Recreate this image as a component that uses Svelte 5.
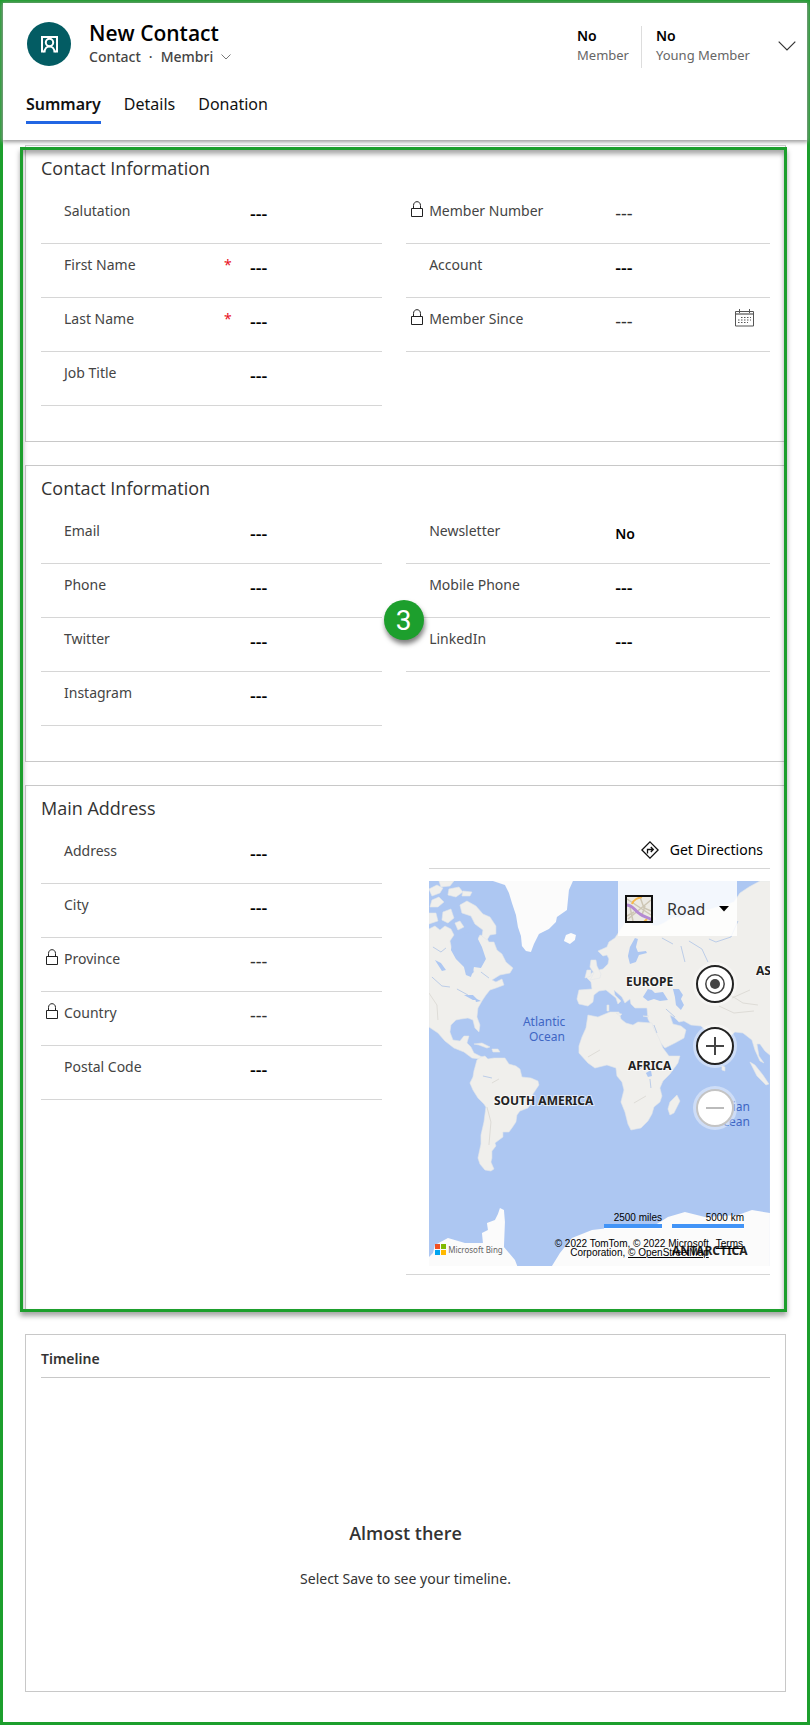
<script>
  // Form sections, each with a left and a right column of fields
  const sections = [
    {
      id: 'general',
      title: 'Contact Information',
      left: [
        { label: 'Salutation' },
        { label: 'First Name', required: true },
        { label: 'Last Name', required: true },
        { label: 'Job Title' }
      ],
      right: [
        { label: 'Member Number', locked: true },
        { label: 'Account' },
        { label: 'Member Since', locked: true, date: true }
      ]
    },
    {
      id: 'channels',
      title: 'Contact Information',
      left: [
        { label: 'Email' },
        { label: 'Phone' },
        { label: 'Twitter' },
        { label: 'Instagram' }
      ],
      right: [
        { label: 'Newsletter', value: 'No' },
        { label: 'Mobile Phone' },
        { label: 'LinkedIn' }
      ]
    },
    {
      id: 'address',
      title: 'Main Address',
      map: true,
      left: [
        { label: 'Address' },
        { label: 'City' },
        { label: 'Province', locked: true },
        { label: 'Country', locked: true },
        { label: 'Postal Code' }
      ],
      right: []
    }
  ];

  const tabs = ['Summary', 'Details', 'Donation'];
  let activeTab = $state('Summary');

  function fieldId(section, field) {
    return section.id + '-' + field.label.toLowerCase().replace(' ', '-');
  }
</script>

{#snippet fieldRow(section, field)}
  <div class="field">
    <span class="lock">
      {#if field.locked}
        <svg width="12" height="16" viewBox="0 0 12 16" fill="none" stroke="#222">
          <path d="M.5 7.5h11v8H.5zM2.5 7.500V4.500C2.500 -.6 9.500 -.6 9.500 4.500V7.500" />
        </svg>
      {/if}
    </span>
    <label for={fieldId(section, field)}>{field.label}</label>
    <span class="required">{field.required ? '*' : ''}</span>
    <input
      id={fieldId(section, field)}
      class:empty={!field.value}
      class:readonly={field.locked}
      value={field.value ?? '---'}
      readonly={field.locked}
    />
    {#if field.date}
      <button class="calendar" aria-label="Pick a date">
        <svg width="19" height="18" viewBox="0 0 19 18" fill="none" stroke="#555">
          <path d="M.5 2.500h18v14.500H.5zM4.500 0v4M14.500 0v4" />
          <path d="M1 5h17" stroke="#999" stroke-width="2" />
          <path d="M6 8.500h10M3 11h13M3 13.500h10" stroke-dasharray="1.500 1.500" />
        </svg>
      </button>
    {/if}
  </div>
{/snippet}

{#snippet mapPanel()}
  <div class="map-field">
    <div class="directions">
      <button>
        <svg width="18" height="18" viewBox="0 0 18 18" fill="none" stroke="#111" stroke-width="1.300">
          <path d="M9 .9 17.100 9 9 17.100.9 9zM6.500 12.500V8.500h5.500M9.800 6l2.500 2.500-2.500 2.500" />
        </svg>
        Get Directions
      </button>
    </div>
    <div class="map">
      <svg class="world" viewBox="0 0 341 385" preserveAspectRatio="xMidYMid slice">
        <rect width="341" height="385" fill="#adc7f2" />
        <g fill="#f0efec" stroke="#e3e6ea" stroke-width=".6" stroke-linejoin="round">
          <!-- North and Central America -->
          <path d="M0 48l6-3 5 4 5-4 6 3 3 6-4 6 2 9 7 7 8 8 4 10 3-3-1-9 6-4 1-8-4-8 4-8 6 2 3 5 5 0 3 8 5 4 4 8 7 6-3 5-10 2-8 5 4 2 6-3 2 6-8 3-6 2-4 5-4 6-4 7-1 9 3 8-1 7-4-4-2-8-5-2-7 1-5 1-5 5-1 7 3 8 7 1 4-5 5 0-2 7 4 4 3 6 8 4-2 2-8-1-8-6-10-4-9-7-7-8-9-6z" />
          <!-- Arctic islands -->
          <path d="M0 8l8-4 6 3-3 5-8 3zM10 0l15 0-4 5-9 1zM3 19l7-3 5 5-6 5-8 0zM20 8l10-2 4 5-7 5-8-2zM31 24l7-4 9 5 7 8 7 3 6 9 0 8-6 1-3 5-5-4 1-6-8-6-4-8-9-3zM14 31l8-3 3 9-6 5-6-3zM26 42l5-2 4 6-6 3zM0 32l7 0 2 8-9 3zM34 10l9 1-2 4-8 0z" />
          <path d="M45 163l8-1 8 4-3 1-8-3zM63 168l6 0 2 3-7 0z" />
          <!-- South America -->
          <path d="M48 179l4-3 4-1 3 3 6-1 11 0 4 6 7 2 4 3 2 8 9 1 7 3 1 4-6 9-1 8-4 6-8 3-3 4-1 7-4 6-3 4-6 0 0 5-4 3-4 3 1 3-4 5 0 7-1 4 3 7-3 2-6-1-5-6-2-6 3-14 0-9 3-13 2-15-2-3-6-6-5-8-3-7 3-6 1-6z" />
          <!-- Eurasia -->
          <path d="M178 66l2-5 6-4 4-6 6-9 8-7 9-6 9 2 5 7-5 6 6 1 7-3 9-6 11 1 8-7 12 0 10-3 11-3 9-3 6-9 9-6 11-6h15v166l-4 9-6-5-5-7-3 0 2 12 5 7-4-2-5-11-3-10-9-7-8-1-8 7-5 8-4 10-4-5-5-19-8-7-10-1-7-4-5 1-5-5-4-2 3 9 8 2 5 4-2 8-9 5-10 5-5-6-6-12-6-11-1-11-12 0-4-4-1-5-5 4-3-6-8-7 1 5 6 6-3 3-2-6-10-8-7 1-5 4-1 7-5 4-9-2-2-5 2-9 13-1-1-7-5-5 9-6 8-2 5-5 1-5-2-4-4 1-5-5z" />
          <!-- Africa -->
          <path d="M159 134l10 2 12-5 9 0 2 7 5 4 7 2 5-3 14 1 2 6 5 9 4 10 6 8 11 0-2 7-8 11-7 7-3 7 2 8-2 6-6 5-2 7-4 7-7 7-10 2-3-6-3-12-4-10 3-12-2-8-5-6-1-8-9-3-12 3-7-5-9-10 0-7 3-9 4-9z" />
          <path d="M248 214l3 6-6 12-4 2-2-6 2-7zM158 89l4 0 0 6-6 2zM162 79l5 0 1 6 4 8-1 4-10 2 4-7-4-6z" />
          <path d="M321 181l5 3 8 10 6 9-3 1-9-9zM178 124l2 0 0 6-2 0zM187 132l6 1-2 2zM214 135l6 0-1 1zM293 185l3 1 0 4-3-1z" />
        </g>
        <g fill="#adc7f2">
          <path d="M24 59l7-4 9-4 8 5 5 10 4 12-5 9-7-1-3 10-5-2-2-8-8-8-5-9zM6 79l6 3 5 7-4 1zM35 114l9 0 5 5-5 0zM46 117l6 3-5 1z" />
          <path d="M199 75l2-9 5-9 3 1-2 8 2 5 8-1 1 2-8 2-3 7-6 2z" />
          <path d="M214 116l5-8 4 1 3 3 8-1 5 8-8 1-6-2-6 2zM244 108l6 0 4 6-2 4 3 6-3 5-5-5-1-8zM220 40l5-4 1 6-3 2zM260 30l3-6 1 7zM217 192l5-3 1 6-4 1z" />
        </g>
        <g fill="none" stroke="#bccde8">
          <path d="M4 66l8 5 5-4M3 96l10 9 8 1M28 108l11 6M52 91l8 6M309 40l-7 16-15 5-7-3M260 60l13 8 6 13M252 65l4 16M233 57l11 6M218 181l-8 8M221 198l1 9M54 195l9 2M228 152l-3-8M237 128l9 8" />
        </g>
        <g fill="none" stroke="#dedcd7">
          <path d="M272 110l14 5 17 0 11 7 15 2M290 125l15 7 20-2M303 117l18-8M58 226l4 15-2 23M0 112l8 12 1 15M63 202l7-4M171 169l-12 7M205 222l12-7" />
        </g>
        <!-- Greenland, Iceland and Antarctica -->
        <g fill="#fbfbfb">
          <path d="M64 0L76 4l4 8 3 10 4 12 2 12 3 9 1 10 4 5 5 1 3-8 5-10 10-5 7-7 1-5 10-7 1-10 1-10 4-9zM137 54l5-2 5 2-1 5-5 4-6-3z" />
          <path d="M0 376l4-4 2-8 13-7 17 5 18 0-1-10 6-3-1-7 8-3 3-6 2-6 4 2 1 12-1 25 11 13 7 18H0zM123 385l8-13 12-15 20-8 26-3 34 0 16-10 17-5 20 5 33-2 14-5 18 3v53z" />
        </g>
        <g class="names">
          <text x="197" y="105">EUROPE</text>
          <text x="327" y="94">ASIA</text>
          <text x="199" y="189">AFRICA</text>
          <text x="65" y="224">SOUTH AMERICA</text>
          <text x="243" y="374">ANTARCTICA</text>
        </g>
        <g class="oceans">
          <text x="94" y="145">Atlantic</text>
          <text x="100" y="160">Ocean</text>
          <text x="321" y="230" text-anchor="end">Indian</text>
          <text x="321" y="245" text-anchor="end">Ocean</text>
        </g>
      </svg>

      <div class="map-style">
        <svg width="28" height="28" viewBox="0 0 28 28" fill="none">
          <rect x="1" y="1" width="26" height="26" fill="#eceae4" />
          <path d="M2 4l24 16M26 5L3 24M15 2l4 11 7 3M5 12l3 14M9 17l-7 4M20 11l-3 9" stroke="#cdc6b4" stroke-width="1.500" />
          <path d="M7 9c2-5 6-6 10-7M19 27l3-3" stroke="#f7b84b" stroke-width="2" />
          <path d="M1 10c8 0 8 6 14 9 4 3 7 3 12 6" stroke="#b48ad2" stroke-width="3" />
          <rect x="1" y="1" width="26" height="26" stroke="#111" stroke-width="2" />
        </svg>
        <select aria-label="Map style">
          <option>Road</option>
        </select>
        <svg class="caret" width="10" height="6" viewBox="0 0 10 6"><path d="M0 0h10L5 5.500z" /></svg>
      </div>

      <div class="map-controls">
        <button aria-label="Locate me">
          <svg width="32" height="32" viewBox="0 0 32 32" fill="none" stroke="#444" stroke-width="1.500">
            <circle cx="16" cy="16" r="9.200" />
            <circle cx="16" cy="16" r="5" fill="#444" stroke="none" />
          </svg>
        </button>
        <button aria-label="Zoom in">
          <svg width="32" height="32" viewBox="0 0 32 32" stroke="#444" stroke-width="2">
            <path d="M7 16h18M16 7v18" />
          </svg>
        </button>
        <button aria-label="Zoom out" disabled>
          <svg width="32" height="32" viewBox="0 0 32 32" stroke="#bbb" stroke-width="2">
            <path d="M7 16h18" />
          </svg>
        </button>
      </div>

      <div class="scale">
        <span class="miles">2500 miles</span>
        <span class="km">5000 km</span>
      </div>

      <div class="bing">
        <svg width="11" height="11" viewBox="0 0 11 11">
          <path d="M0 0h5v5H0z" fill="#f25022" />
          <path d="M6 0h5v5H6z" fill="#7fba00" />
          <path d="M0 6h5v5H0z" fill="#00a4ef" />
          <path d="M6 6h5v5H6z" fill="#ffb900" />
        </svg>
        Microsoft Bing
      </div>

      <div class="credits">
        <p>© 2022 TomTom, © 2022 Microsoft Corporation, <a href="#osm">© OpenStreetMap</a></p>
        <a href="#terms">Terms</a>
      </div>
    </div>
  </div>
{/snippet}

<main>
  <header>
    <div class="record">
      <svg class="avatar" width="44" height="44" viewBox="0 0 44 44" fill="none" stroke="#fff" stroke-width="2">
        <circle cx="22" cy="22" r="22" fill="#035c63" stroke="none" />
        <path d="M17 29.500H15V15h15v14.500h-2" />
        <circle cx="22.500" cy="20.500" r="3.700" />
        <path d="M17.500 30.500c0-8 10-8 10 0" />
      </svg>
      <div class="heading">
        <h1>New Contact</h1>
        <div class="subtitle">
          <span>Contact</span>
          <span>·</span>
          <button>
            Membri
            <svg width="10" height="6" viewBox="0 0 10 6" fill="none" stroke="#777"><path d="M.5.5 5 5 9.500.5" /></svg>
          </button>
        </div>
      </div>
      <dl>
        <div>
          <dt>Member</dt>
          <dd>No</dd>
        </div>
        <div>
          <dt>Young Member</dt>
          <dd>No</dd>
        </div>
      </dl>
      <button class="expand" aria-label="More header fields">
        <svg width="18" height="10" viewBox="0 0 18 10" fill="none" stroke="#333" stroke-width="1.200"><path d="M.7.7 9 9 17.300.7" /></svg>
      </button>
    </div>
    <nav>
      {#each tabs as tab}
        <button class:active={activeTab === tab} onclick={() => (activeTab = tab)}>{tab}</button>
      {/each}
    </nav>
  </header>

  <div class="body">
    <div class="sections">
      {#each sections as section}
        <section class="card">
          <h2>{section.title}</h2>
          <div class="columns">
            <div>
              {#each section.left as field}
                {@render fieldRow(section, field)}
              {/each}
            </div>
            <div>
              {#each section.right as field}
                {@render fieldRow(section, field)}
              {/each}
              {#if section.map}
                {@render mapPanel()}
              {/if}
            </div>
          </div>
        </section>
      {/each}
      <div class="highlight"></div>
      <span class="step">3</span>
    </div>

    <section class="card timeline">
      <h3>Timeline</h3>
      <div class="message">
        <h4>Almost there</h4>
        <p>Select Save to see your timeline.</p>
      </div>
    </section>
  </div>
</main>

<style>
  :global(body) {
    background: #fff;
  }

  main {
    box-sizing: border-box;
    min-height: 100vh;
    border: 3px solid #1d9f2d;
    font-family: 'Noto Sans', 'Open Sans', sans-serif;
    font-size: 14px;
    line-height: 20px;
    color: #333;
  }

  h1, h2, h3, h4, p, dl, dd {
    margin: 0;
  }

  h1, h2, h4 {
    font-family: 'Open Sans', 'Noto Sans', sans-serif;
  }

  button, input, select {
    font: inherit;
    color: inherit;
    border: 0;
    padding: 0;
    background: none;
  }

  button {
    cursor: pointer;
  }

  svg {
    display: block;
    flex: none;
  }

  /* Record header */
  header {
    padding: 16px 11px 0 23px;
    height: 121px;
    box-shadow: 0 1px 4px 1px #999;
  }

  .record {
    display: flex;
  }

  .avatar {
    margin: 3px 18px 0 1px;
  }

  h1 {
    font-size: 21px;
    line-height: 28px;
    font-weight: 600;
    color: #000;
  }

  .subtitle {
    display: flex;
    gap: 8px;
    font-weight: 500;
    color: #444;
  }

  .subtitle button {
    display: flex;
    align-items: center;
    gap: 8px;
  }

  dl {
    display: flex;
    margin-left: auto;
    padding-top: 7px;
  }

  dl div {
    display: flex;
    flex-direction: column-reverse;
    justify-content: flex-end;
    height: 42px;
  }

  dl div + div {
    margin-left: 12px;
    padding-left: 14px;
    border-left: 1px solid #ddd;
  }

  dt {
    font-size: 13px;
    line-height: 18px;
    color: #666;
  }

  dd {
    font-weight: 600;
    color: #000;
  }

  .expand {
    align-self: flex-start;
    margin: 22px 0 0 28px;
  }

  nav {
    display: flex;
    gap: 23px;
    margin-top: 24px;
  }

  nav button {
    padding-bottom: 5px;
    font-size: 16px;
    line-height: 24px;
    color: #111;
    border-bottom: 3px solid transparent;
  }

  nav .active {
    font-weight: 600;
    border-color: #2266e3;
  }

  /* Form cards */
  .body {
    padding: 5px 21px 30px 22px;
  }

  .sections {
    position: relative;
    display: grid;
    gap: 23px;
    margin-bottom: 23px;
  }

  .card {
    padding: 9px 15px 35px;
    border: 1px solid #c8c8c8;
    background: #fff;
  }

  h2 {
    margin-bottom: 9px;
    font-size: 18px;
    line-height: 26px;
    font-weight: 400;
  }

  .columns {
    display: grid;
    grid-template-columns: minmax(0, 15fr) minmax(0, 16fr);
    gap: 24px;
  }

  .field {
    box-sizing: border-box;
    display: grid;
    grid-template-columns: 23px 160px 26px minmax(0, 1fr) auto;
    height: 54px;
    padding-top: 11px;
    border-bottom: 1px solid #d6d6d6;
  }

  .field label {
    color: #444;
  }

  .lock {
    padding-left: 5px;
  }

  .required {
    color: #e81123;
  }

  input {
    height: 24px;
    min-width: 0;
    font-weight: 600;
    color: #000;
  }

  .empty {
    font-size: 18px;
    font-weight: 500;
  }

  .readonly {
    color: #333;
    font-weight: 400;
  }

  .calendar {
    height: 18px;
    margin-right: 16px;
  }

  .highlight {
    position: absolute;
    inset: 2px -1px -1px -5px;
    border: 3px solid #1d9f2d;
    box-shadow: 0 4px 5px rgba(0, 0, 0, 0.35), inset 0 4px 5px rgba(0, 0, 0, 0.35);
    pointer-events: none;
  }

  .step {
    position: absolute;
    top: 455px;
    left: calc(50% - 22px);
    width: 40px;
    height: 40px;
    border-radius: 50%;
    background: #1d9f2d;
    box-shadow: 1px 4px 5px rgba(0, 0, 0, 0.5);
    color: #fff;
    font: 28px/41px Roboto, sans-serif;
    text-align: center;
  }

  /* Map */
  .map-field {
    padding: 0 0 8px 23px;
    border-bottom: 1px solid #d6d6d6;
  }

  .directions {
    display: flex;
    justify-content: flex-end;
    height: 38px;
    margin-bottom: 12px;
    padding-right: 7px;
    border-bottom: 1px solid #d6d6d6;
  }

  .directions button {
    display: flex;
    align-items: center;
    gap: 11px;
    padding-top: 2px;
    color: #000;
  }

  .map {
    position: relative;
    height: 385px;
    overflow: hidden;
  }

  .world {
    width: 100%;
    height: 100%;
  }

  .names {
    font-size: 12px;
    font-weight: 700;
    fill: #222;
    stroke: rgba(255, 255, 255, 0.6);
    stroke-width: 2px;
    paint-order: stroke;
  }

  .oceans {
    font-size: 12px;
    fill: #3f66c4;
  }

  .map-style {
    position: absolute;
    top: 0;
    right: 33px;
    display: flex;
    align-items: center;
    box-sizing: border-box;
    width: 119px;
    height: 55px;
    padding: 0 8px 0 7px;
    background: rgba(255, 255, 255, 0.85);
  }

  .map-style select {
    flex: 1;
    min-width: 0;
    margin-left: 14px;
    appearance: none;
    font-size: 16px;
  }

  .map-controls {
    position: absolute;
    top: 84px;
    right: 36px;
    display: grid;
    gap: 24px;
  }

  .map-controls button {
    display: grid;
    place-items: center;
    width: 38px;
    height: 38px;
    border: 2px solid #222;
    border-radius: 50%;
    background: #fff;
    box-shadow: 0 0 0 3px rgba(255, 255, 255, 0.4);
  }

  .map-controls button:disabled {
    border-color: #c4c4c4;
  }

  .scale {
    position: absolute;
    right: 26px;
    bottom: 38px;
    display: flex;
    gap: 10px;
    font: 10px/12px 'Liberation Sans', Arial, sans-serif;
    color: #000;
    text-align: right;
  }

  .scale span {
    border-bottom: 4px solid #4294f7;
    box-shadow: 0 1px 0 #fff;
  }

  .miles {
    width: 58px;
  }

  .km {
    width: 72px;
  }

  .bing {
    position: absolute;
    left: 6px;
    bottom: 11px;
    display: flex;
    align-items: center;
    gap: 2px;
    font-size: 8px;
    line-height: 11px;
    color: #666;
  }

  .credits {
    position: absolute;
    right: 27px;
    bottom: 9px;
    display: flex;
    gap: 7px;
    font: 10px/9px 'Liberation Sans', Arial, sans-serif;
    color: #000;
  }

  .credits p {
    width: 160px;
    text-align: right;
  }

  .credits a {
    color: inherit;
  }

  /* Timeline */
  .timeline {
    padding: 9px 15px 102px;
  }

  h3 {
    padding: 5px 0 8px;
    border-bottom: 1px solid #c8c8c8;
    font-size: 14px;
    font-weight: 600;
  }

  .message {
    padding-top: 142px;
    text-align: center;
  }

  h4 {
    margin-bottom: 23px;
    font-size: 18px;
    line-height: 26px;
    font-weight: 600;
  }
</style>
